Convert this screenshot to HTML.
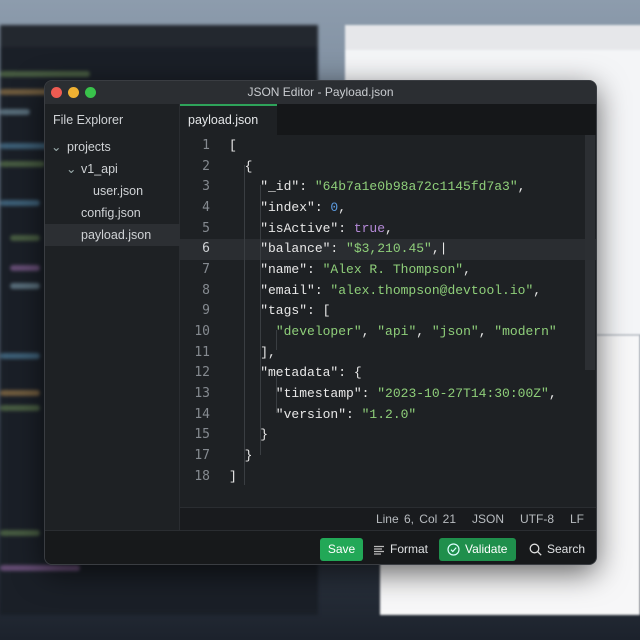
<!DOCTYPE html>
<html><head><style>
*{margin:0;padding:0;box-sizing:border-box}
body{width:640px;height:640px;overflow:hidden;position:relative;font-family:"Liberation Sans",sans-serif;background:linear-gradient(#8d9cad 0%,#6f7f91 30%,#3a4452 75%,#1c222c 100%)}
.bgl{position:absolute;left:0;top:25px;width:318px;height:590px;background:#1a1f27;filter:blur(1.5px)}
.bgl .hd{height:22px;background:#23282f}
.bgl i{position:absolute;height:6px;border-radius:3px;opacity:.55}
.bgr{position:absolute;left:345px;top:25px;width:300px;height:310px;background:#f4f5f7;border-radius:6px 0 0 0;filter:blur(1px)}
.bgr .t{height:25px;background:#e6e7ea}
.bgr2{position:absolute;left:380px;top:335px;width:260px;height:280px;background:#f7f7f8;filter:blur(1px)}
.bgbar{position:absolute;left:318px;top:335px;width:62px;height:24px;background:#3a4250;filter:blur(2px)}
.win{position:absolute;left:44px;top:80px;width:553px;height:485px;background:#1e2124;border-radius:8px;overflow:hidden;box-shadow:0 8px 30px rgba(0,0,0,.6);border:1px solid #3a3d42}
.title{height:23px;background:#2b2e32;color:#c9ccd0;font-size:12px;text-align:center;line-height:23px;position:relative}
.dot{position:absolute;top:6px;width:11px;height:11px;border-radius:50%}
.side{position:absolute;left:0;top:23px;width:135px;height:426px;background:#1e2124;border-right:1px solid #2a2d31;color:#cfd2d5;font-size:12.5px}
.side div{position:absolute;height:22px;line-height:22px}
.tabs{position:absolute;left:135px;top:23px;right:0;height:31px;background:#151719}
.tab{position:absolute;left:0;top:0;width:97px;height:31px;background:#1e2124;border-top:2px solid #2ea35a;color:#e4e6e8;font-size:12.5px;line-height:29px;padding-left:8px}
.code{position:absolute;left:135px;top:54px;right:0;height:372px;background:#1e2124;font-family:"Liberation Mono",monospace;font-size:13px}
.ln{position:absolute;left:0;width:30px;text-align:right;color:#858a90;font-family:"DejaVu Sans Mono","Liberation Mono",monospace;font-size:13px}
.row{position:absolute;left:49px;white-space:pre;color:#e8e8e8}
.s{color:#8fcf7a}.n{color:#5c9be0}.b{color:#b58ad8}
.hl{position:absolute;left:0;right:0;top:104px;height:21px;background:#2a2d31}
.guide{position:absolute;width:1px;background:#3a3e42}
.status{position:absolute;left:135px;top:426px;right:0;height:23px;background:#191b1e;border-top:1px solid #2a2d31;color:#b8bcc0;font-size:12px;line-height:22px;text-align:right;padding-right:12px;word-spacing:2px}
.bottom{position:absolute;left:0;top:449px;right:0;height:36px;background:#17191b;border-top:1px solid #2a2d31;font-size:12px;color:#dfe1e3}
.btn{position:absolute;top:7px;height:23px;line-height:23px;border-radius:3px;padding:0 8px;display:flex;align-items:center;gap:5px}
.sb{position:absolute;right:1px;top:0;width:10px;height:235px;background:#2c2f33}
</style></head><body>
<div class="bgl"><div class="hd"></div>
<i style="left:0;top:46px;width:90px;background:#6b8a55"></i>
<i style="left:0;top:64px;width:60px;background:#b58a50"></i>
<i style="left:0;top:84px;width:30px;background:#8ab"></i>
<i style="left:0;top:118px;width:50px;background:#5a8fb5"></i>
<i style="left:0;top:136px;width:45px;background:#6b8a55"></i>
<i style="left:0;top:175px;width:40px;background:#5a8fb5"></i>
<i style="left:10px;top:210px;width:30px;background:#6b8a55"></i>
<i style="left:10px;top:240px;width:30px;background:#a070b0"></i>
<i style="left:10px;top:258px;width:30px;background:#8ab"></i>
<i style="left:0;top:328px;width:40px;background:#5a8fb5"></i>
<i style="left:0;top:365px;width:40px;background:#b58a50"></i>
<i style="left:0;top:380px;width:40px;background:#6b8a55"></i>
<i style="left:0;top:505px;width:40px;background:#6b8a55"></i>
<i style="left:0;top:540px;width:80px;background:#a070b0"></i>
</div>
<div class="bgr"><div class="t"></div></div>
<div class="bgr2"></div>
<div class="bgbar"></div>
<div class="win">
 <div class="title"><span class="dot" style="left:6px;background:#ee5b52"></span><span class="dot" style="left:23px;background:#f0b132"></span><span class="dot" style="left:40px;background:#39c24b"></span>JSON Editor - Payload.json</div>
 <div class="side">
  <div style="left:8px;top:5px">File Explorer</div>
  <div style="left:6px;top:32px;color:#9aa">⌄</div><div style="left:22px;top:32px">projects</div>
  <div style="left:21px;top:54px;color:#9aa">⌄</div><div style="left:36px;top:54px">v1_api</div>
  <div style="left:48px;top:76px">user.json</div>
  <div style="left:36px;top:98px">config.json</div>
  <div style="left:0;top:120px;width:135px;background:#2c2f33"></div><div style="left:36px;top:120px">payload.json</div>
 </div>
 <div class="tabs"><div class="tab">payload.json</div></div>
 <div class="code">
  <div class="hl"></div>
  <div class="sb"></div>
  <div class="guide" style="left:64px;top:30px;height:320px"></div>
  <div class="guide" style="left:80px;top:50px;height:270px"></div>
  <div class="guide" style="left:96px;top:195px;height:20px"></div>
  <div class="guide" style="left:96px;top:236px;height:42px"></div>
  <div class="ln" style="top:3px">1</div><div class="row" style="top:3px">[</div>
  <div class="ln" style="top:24px">2</div><div class="row" style="top:24px">  {</div>
  <div class="ln" style="top:44px">3</div><div class="row" style="top:44px">    "_id": <span class="s">"64b7a1e0b98a72c1145fd7a3"</span>,</div>
  <div class="ln" style="top:65px">4</div><div class="row" style="top:65px">    "index": <span class="n">0</span>,</div>
  <div class="ln" style="top:86px">5</div><div class="row" style="top:86px">    "isActive": <span class="b">true</span>,</div>
  <div class="ln" style="top:106px;color:#d0d3d6">6</div><div class="row" style="top:106px">    "balance": <span class="s">"$3,210.45"</span>,|</div>
  <div class="ln" style="top:127px">7</div><div class="row" style="top:127px">    "name": <span class="s">"Alex R. Thompson"</span>,</div>
  <div class="ln" style="top:148px">8</div><div class="row" style="top:148px">    "email": <span class="s">"alex.thompson@devtool.io"</span>,</div>
  <div class="ln" style="top:168px">9</div><div class="row" style="top:168px">    "tags": [</div>
  <div class="ln" style="top:189px">10</div><div class="row" style="top:189px">      <span class="s">"developer"</span>, <span class="s">"api"</span>, <span class="s">"json"</span>, <span class="s">"modern"</span></div>
  <div class="ln" style="top:210px">11</div><div class="row" style="top:210px">    ],</div>
  <div class="ln" style="top:230px">12</div><div class="row" style="top:230px">    "metadata": {</div>
  <div class="ln" style="top:251px">13</div><div class="row" style="top:251px">      "timestamp": <span class="s">"2023-10-27T14:30:00Z"</span>,</div>
  <div class="ln" style="top:272px">14</div><div class="row" style="top:272px">      "version": <span class="s">"1.2.0"</span></div>
  <div class="ln" style="top:292px">15</div><div class="row" style="top:292px">    }</div>
  <div class="ln" style="top:313px">17</div><div class="row" style="top:313px">  }</div>
  <div class="ln" style="top:334px">18</div><div class="row" style="top:334px">]</div>
 </div>
 <div class="status">Line 6, Col 21 &nbsp; JSON &nbsp; UTF-8 &nbsp; LF</div>
 <div class="bottom">
  <div class="btn" style="left:275px;width:43px;justify-content:center;background:#22a857;color:#fff">Save</div>
  <div class="btn" style="left:322px;padding:0 6px"><svg width="12" height="12" viewBox="0 0 12 12" stroke="#bbb" stroke-width="1.2"><path d="M1 2.5h10M1 5h8M1 7.5h10M1 10h7"/></svg>Format</div>
  <div class="btn" style="left:394px;width:77px;background:#1f8f4c;color:#fff;padding:0 8px"><svg width="13" height="13" viewBox="0 0 13 13" fill="none" stroke="#dff" stroke-width="1.2"><circle cx="6.5" cy="6.5" r="5.5"/><path d="M4 6.7l1.8 1.8L9.2 4.6"/></svg>Validate</div>
  <div class="btn" style="left:478px;padding:0 6px"><svg width="13" height="13" viewBox="0 0 13 13" fill="none" stroke="#ddd" stroke-width="1.3"><circle cx="5.5" cy="5.5" r="4.3"/><path d="M8.6 8.6l3.6 3.6"/></svg>Search</div>
 </div>
</div>
</body></html>
